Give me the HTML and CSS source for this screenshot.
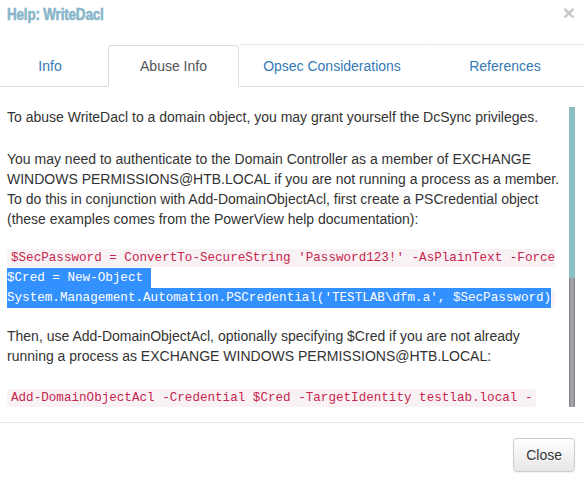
FILE: index.html
```html
<!DOCTYPE html>
<html lang="en">
<head>
<meta charset="utf-8">
<title>Help: WriteDacl</title>
<link rel="stylesheet" href="styles.css">
</head>
<body>
<div class="modal">
  <header class="modal-header">
    <h4 class="modal-title">Help: WriteDacl</h4>
    <span class="close">×</span>
  </header>
  <ul class="tabs">
    <li class="tab first"><a>Info</a></li>
    <li class="tab active"><a>Abuse Info</a></li>
    <li class="tab lined"><a>Opsec Considerations</a></li>
    <li class="tab lined"><a>References</a></li>
  </ul>
  <div class="modal-body">
    <div class="scroll">
      <p class="para p1">To abuse WriteDacl to a domain object, you may grant yourself the DcSync privileges.</p>
      <p class="para p2">You may need to authenticate to the Domain Controller as a member of EXCHANGE WINDOWS PERMISSIONS@HTB.LOCAL if you are not running a process as a member.<br>To do this in conjunction with Add-DomainObjectAcl, first create a PSCredential object<br>(these examples comes from the PowerView help documentation):</p>
      <div class="code-block cb1"><code>$SecPassword = ConvertTo-SecureString 'Password123!' -AsPlainText -Force
<span class="sel">$Cred = New-Object 
System.Management.Automation.PSCredential('TESTLAB\dfm.a', $SecPassword)</span></code></div>
      <p class="para p3">Then, use Add-DomainObjectAcl, optionally specifying $Cred if you are not already running a process as EXCHANGE WINDOWS PERMISSIONS@HTB.LOCAL:</p>
      <div class="code-block"><code>Add-DomainObjectAcl -Credential $Cred -TargetIdentity testlab.local -</code></div>
    </div>
    <div class="scrollbar"><div class="thumb"></div></div>
  </div>
  <footer class="modal-footer">
    <button class="btn">Close</button>
  </footer>
</div>
</body>
</html>
```
FILE: styles.css
```css
html, body {
  margin: 0;
  padding: 0;
  background: #fff;
}
body {
  width: 585px;
  height: 485px;
  overflow: hidden;
  font-family: "Liberation Sans", Arial, sans-serif;
  font-size: 14px;
  line-height: 20px;
  color: #333;
}
.modal {
  width: 585px;
}
.modal-header {
  height: 44px;
  box-sizing: border-box;
  display: flex;
  justify-content: space-between;
  align-items: flex-start;
  padding: 0 10px 0 7px;
}
.modal-title {
  margin: 0;
  padding-top: 5px;
  font-family: "Liberation Sans", Arial, sans-serif;
  font-weight: bold;
  font-size: 16px;
  line-height: 20px;
  color: #89b6ca;
  -webkit-text-stroke: 0.6px #89b6ca;
  transform: scaleX(0.84);
  transform-origin: left center;
  letter-spacing: -0.2px;
}
.close {
  padding-top: 2px;
  font-family: "Liberation Sans", Arial, sans-serif;
  font-size: 21px;
  font-weight: bold;
  line-height: 21px;
  color: #c8c8c8;
}
.tabs {
  display: grid;
  grid-template-columns: 108px 131px 186px 160px;
  margin: 0;
  padding: 0;
  list-style: none;
}
.tab a {
  display: block;
  text-align: center;
  color: #337ab7;
  border: 1px solid transparent;
  border-bottom-color: #ddd;
  padding: 11px 0 10px;
}
.tab.first a {
  padding-right: 8px;
}
.tab.lined a {
  border-top-color: #e5e5e5;
}
.tab.active a {
  margin-top: 1px;
  padding-top: 10px;
  color: #555;
  border-color: #ddd;
  border-bottom-color: #fff;
  border-radius: 4px 4px 0 0;
}
.modal-body {
  position: relative;
  padding: 20px 0 13px;
}
.scroll {
  height: 302px;
  overflow: hidden;
  padding: 0 23px 0 7px;
}
.para {
  margin: 0;
}
.p1 { margin-bottom: 22px; }
.p2 { margin-bottom: 19px; }
.p3 { margin-bottom: 22px; }
.code-block {
  font-family: "Liberation Mono", "Courier New", monospace;
  font-size: 12.6px;
  line-height: 20px;
}
.cb1 { margin-bottom: 18px; }
code {
  font-family: "Liberation Mono", "Courier New", monospace;
  font-size: 12.6px;
  color: #c7254e;
  background: #f9f2f4;
  padding: 2px 4px;
  border-radius: 4px;
  white-space: pre;
}
.sel {
  background: #3390ff;
  color: #fff;
  padding: 3px 0;
}
.scrollbar {
  position: absolute;
  left: 569px;
  top: 20px;
  width: 6px;
  height: 300px;
  background: linear-gradient(to right, #77777d, #a4a4a9 35%, #a4a4a9 65%, #7a7a80);
  border-radius: 0 0 1px 1px;
}
.thumb {
  height: 171px;
  background: #8bbfc4;
}
.modal-footer {
  border-top: 1px solid #e5e5e5;
  padding: 15px 10px 0;
  display: flex;
  justify-content: flex-end;
}
.btn {
  font-family: "Liberation Sans", Arial, sans-serif;
  font-size: 14px;
  line-height: 20px;
  color: #333;
  padding: 6px 12px;
  border: 1px solid #ccc;
  border-radius: 4px;
  background: linear-gradient(to bottom, #fff 0, #e6e6e6 100%);
  box-shadow: 0 1px 1px rgba(0, 0, 0, 0.06);
  text-shadow: 0 1px 0 #fff;
}
```
